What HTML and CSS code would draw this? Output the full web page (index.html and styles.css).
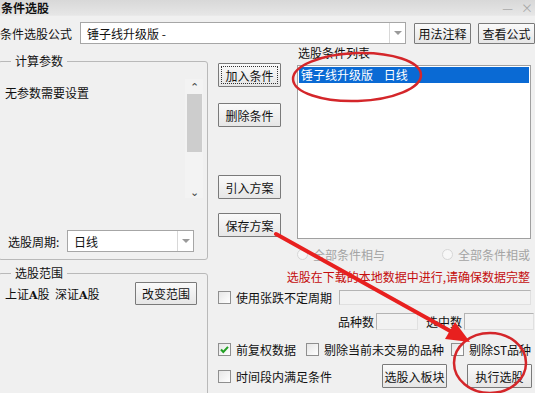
FILE: index.html
```html
<!DOCTYPE html>
<html lang="zh">
<head>
<meta charset="utf-8">
<title>条件选股</title>
<link rel="stylesheet" href="styles.css">
</head>
<body>
<div class="win">
  <div class="titlebar">
    <span class="title">条件选股</span>
    <span class="ctrls"><span class="min">—</span><span class="close">×</span></span>
  </div>

  <div class="formula-row">
    <span class="lbl">条件选股公式</span>
    <div class="combo combo-formula"><span class="combo-text">锤子线升级版 -</span><span class="combo-btn"><i class="tri"></i></span></div>
    <button class="btn btn-top">用法注释</button>
    <button class="btn btn-top">查看公式</button>
  </div>

  <div class="main">
    <div class="left">
      <fieldset class="grp grp-params">
        <legend>计算参数</legend>
        <div class="param-area">
          <div class="param-text">无参数需要设置</div>
          <div class="vscroll">
            <span class="arr">&#8963;</span>
            <span class="thumb"></span>
            <span class="spacer"></span>
            <span class="arr">&#8964;</span>
          </div>
        </div>
        <div class="period-row">
          <span class="lbl period-lbl">选股周期:</span>
          <div class="combo combo-period"><span class="combo-text">日线</span><span class="combo-btn"><i class="tri"></i></span></div>
        </div>
      </fieldset>
      <fieldset class="grp grp-range">
        <legend>选股范围</legend>
        <div class="range-row">
          <span class="range-text">上证<b class="lat">A</b>股&nbsp;&nbsp;深证<b class="lat">A</b>股</span>
          <button class="btn btn-range">改变范围</button>
        </div>
      </fieldset>
    </div>

    <div class="right">
      <div class="upper">
        <div class="mid-btns">
          <button class="btn btn-mid btn-focus"><span class="focus-ring">加入条件</span></button>
          <button class="btn btn-mid b2">删除条件</button>
          <button class="btn btn-mid b3">引入方案</button>
          <button class="btn btn-mid b4">保存方案</button>
        </div>
        <div class="list-col">
          <div class="list-lbl">选股条件列表</div>
          <div class="listbox">
            <div class="list-item sel">锤子线升级版&nbsp;&nbsp;&nbsp;&nbsp;日线</div>
          </div>
        </div>
      </div>

      <div class="radios">
        <span class="radio-wrap r1"><i class="radio"></i>全部条件相与</span>
        <span class="radio-wrap r2"><i class="radio"></i>全部条件相或</span>
      </div>

      <div class="warn">选股在下载的本地数据中进行,请确保数据完整</div>

      <div class="row row-cycle">
        <span class="cb-wrap"><i class="cb"></i>使用张跌不定周期</span>
        <span class="field field-cycle"></span>
      </div>

      <div class="row row-count">
        <span class="lbl">品种数</span>
        <span class="field field-count"></span>
        <span class="lbl sel-lbl">选中数</span>
        <span class="field field-sel"></span>
      </div>

      <div class="row row-opts">
        <span class="cb-wrap"><i class="cb checked"><svg viewBox="0 0 13 13" width="13" height="13"><path d="M3 6.5 L5.3 9 L10 3.8" fill="none" stroke="#22a024" stroke-width="2"/></svg></i>前复权数据</span>
        <span class="cb-wrap o2"><i class="cb"></i>剔除当前未交易的品种</span>
        <span class="cb-wrap o3"><i class="cb"></i>剔除ST品种</span>
      </div>

      <div class="row row-last">
        <span class="cb-wrap"><i class="cb"></i>时间段内满足条件</span>
        <button class="btn btn-bottom b-block">选股入板块</button>
        <button class="btn btn-bottom b-run">执行选股</button>
      </div>
    </div>
  </div>

  <svg class="annot" width="535" height="393" viewBox="0 0 535 393">
    <ellipse cx="357" cy="77" rx="64" ry="24" transform="rotate(-2 357 77)" fill="none" stroke="#d4262a" stroke-width="2.5"/>
    <ellipse cx="490" cy="363" rx="36" ry="30" fill="none" stroke="#d4262a" stroke-width="2.5"/>
    <line x1="276" y1="234" x2="452" y2="332" stroke="#e8201f" stroke-width="4" stroke-linecap="round"/>
    <polygon points="470,342 445,339 455,322" fill="#e8201f"/>
  </svg>
</div>
</body>
</html>
```

FILE: styles.css
```css
* { box-sizing: border-box; }
html, body { margin: 0; padding: 0; }
body {
  width: 535px;
  height: 393px;
  overflow: hidden;
  background: #f0f0f0;
  font-family: "Noto Sans CJK SC", "Noto Sans", sans-serif;
  font-size: 12px;
  color: #111;
}
.win {
  position: relative;
  width: 535px;
  height: 393px;
  overflow: hidden;
  background: #f0f0f0;
}
.titlebar {
  height: 16px;
  background: linear-gradient(#d8d8d8, #e6e6e6);
  border-bottom: 1px solid #e9e9e9;
  display: flex;
  justify-content: space-between;
  align-items: flex-start;
}
.title {
  font-weight: bold;
  font-size: 12px;
  line-height: 15px;
  padding-left: 1px;
  color: #111;
}
.ctrls {
  display: flex;
  gap: 8px;
  color: #a8a8a8;
  font-size: 12px;
  line-height: 15px;
  padding-right: 2px;
}

.formula-row {
  display: flex;
  align-items: center;
  height: 22px;
  margin-top: 6px;
}
.formula-row .lbl { width: 80px; }
.combo {
  display: flex;
  align-items: center;
  height: 22px;
  background: #fff;
  border: 1px solid #a6a6a6;
}
.combo-text { flex: 1; padding-left: 6px; white-space: nowrap; }
.combo-btn {
  width: 16px;
  height: 20px;
  border-left: 1px solid #d8d8d8;
  display: flex;
  align-items: center;
  justify-content: center;
}
.tri {
  width: 0; height: 0;
  border-left: 4px solid transparent;
  border-right: 4px solid transparent;
  border-top: 4px solid #9a9a9a;
}
.combo-formula { width: 326px; }
.btn {
  font: inherit;
  font-size: 12px;
  color: #111;
  background: linear-gradient(#fafafa, #e6e6e6);
  border: 1px solid #7a7a7a;
  border-radius: 1px;
  padding: 0;
  display: flex;
  align-items: center;
  justify-content: center;
}
.btn-top { width: 57px; height: 21px; margin-left: 8px; }
.btn-top + .btn-top { margin-left: 7px; }

.main { display: flex; }
.left { width: 208px; flex: none; }
.grp {
  margin: 0;
  border: 1px solid #b9b9b9;
  border-radius: 3px;
  position: relative;
}
.grp legend {
  font-size: 12px;
  line-height: 16px;
  padding: 0 4px;
  margin-left: 6px;
}
.grp-params {
  margin-top: 9px;
  margin-left: -2px;
  width: 210px;
  height: 207px;
  padding: 10px 4px 0 6px;
}
.param-area {
  display: flex;
  height: 119px;
}
.param-text { flex: 1; margin-top: 6px; line-height: 16px; }
.vscroll {
  width: 18px;
  display: flex;
  flex-direction: column;
  align-items: center;
  background: #f3f3f3;
}
.vscroll .arr { height: 14px; line-height: 14px; font-size: 11px; color: #444; }
.vscroll .thumb { width: 15px; height: 58px; margin-top: 1px; background: #cdcdcd; }
.vscroll .spacer { flex: 1; }
.period-row {
  display: flex;
  align-items: center;
  margin-top: 32px;
  height: 22px;
}
.period-lbl { width: 62px; padding-left: 3px; }
.combo-period { width: 127px; }

.grp-range {
  margin-top: 5px;
  margin-left: -2px;
  width: 210px;
  height: 160px;
  padding: 1px 4px 0 6px;
}
.range-row {
  display: flex;
  align-items: center;
  height: 23px;
}
.range-text { width: 130px; }
.lat { font-family: "DejaVu Serif", serif; font-size: 11px; }
.btn-range { width: 62px; height: 23px; }

.right { width: 327px; min-width: 0; flex: none; padding-left: 10px; }
.upper { display: flex; height: 195px; }
.mid-btns { width: 63px; display: flex; flex-direction: column; padding-top: 19px; }
.btn-mid { width: 63px; height: 24px; }
.b2 { margin-top: 16px; }
.b3 { margin-top: 48px; }
.b4 { margin-top: 14px; }
.btn-focus { padding: 2px; }
.focus-ring {
  display: flex; align-items: center; justify-content: center;
  width: 100%; height: 100%;
  border: 1px dotted #333;
}
.list-col { margin-left: 16px; width: 234px; }
.list-lbl { margin-top: 1px; line-height: 16px; padding-left: 1px; }
.listbox {
  margin-top: 4px;
  height: 174px;
  background: #fff;
  border: 1px solid #a0a0a0;
  padding: 1px;
}
.list-item { height: 16px; line-height: 16px; padding-left: 2px; white-space: nowrap; }
.list-item.sel { background: #0a6ad4; color: #fff; }

.radios {
  height: 16px;
  margin-top: 7px;
  display: flex;
  align-items: center;
  color: #a4a4a4;
}
.radio-wrap { display: flex; align-items: center; }
.r1 { margin-left: 79px; }
.r2 { margin-left: 57px; }
.radio {
  width: 11px; height: 11px;
  border: 1px solid #d6d6d6;
  border-radius: 50%;
  background: #f7f7f7;
  margin-right: 5px;
}
.warn {
  margin-top: 7px;
  height: 16px;
  line-height: 16px;
  text-align: right;
  padding-right: 5px;
  color: #c40d0d;
  white-space: nowrap;
}
.row { display: flex; align-items: center; }
.cb-wrap { display: flex; align-items: center; white-space: nowrap; }
.cb {
  width: 13px; height: 13px;
  border: 1px solid #8f8f8f;
  background: linear-gradient(135deg, #e6e6e6, #fff);
  margin-right: 5px;
  display: flex;
  flex: none;
}
.cb.checked svg { margin: -1px; }
.row-cycle { margin-top: 4px; height: 16px; }
.field { height: 16px; background: #f2f2f2; border: 1px solid #b4b4b4; border-right-color: #e0e0e0; border-bottom-color: #e0e0e0; }
.field-cycle { margin-left: 7px; width: 192px; height: 15px; }
.row-count { margin-top: 8px; height: 17px; }
.row-count .lbl:first-child { margin-left: 120px; }
.field-count { width: 42px; height: 17px; margin-left: 2px; }
.sel-lbl { margin-left: 8px; }
.field-sel { width: 70px; height: 17px; margin-left: 2px; }
.row-opts { margin-top: 11px; height: 16px; }
.o2 { margin-left: 10px; }
.o3 { margin-left: 7px; }
.row-last { margin-top: 7px; height: 24px; }
.btn-bottom { height: 24px; }
.b-block { width: 65px; margin-left: 50px; }
.b-run { width: 65px; margin-left: 20px; }

.annot { position: absolute; left: 0; top: 0; pointer-events: none; }
```
